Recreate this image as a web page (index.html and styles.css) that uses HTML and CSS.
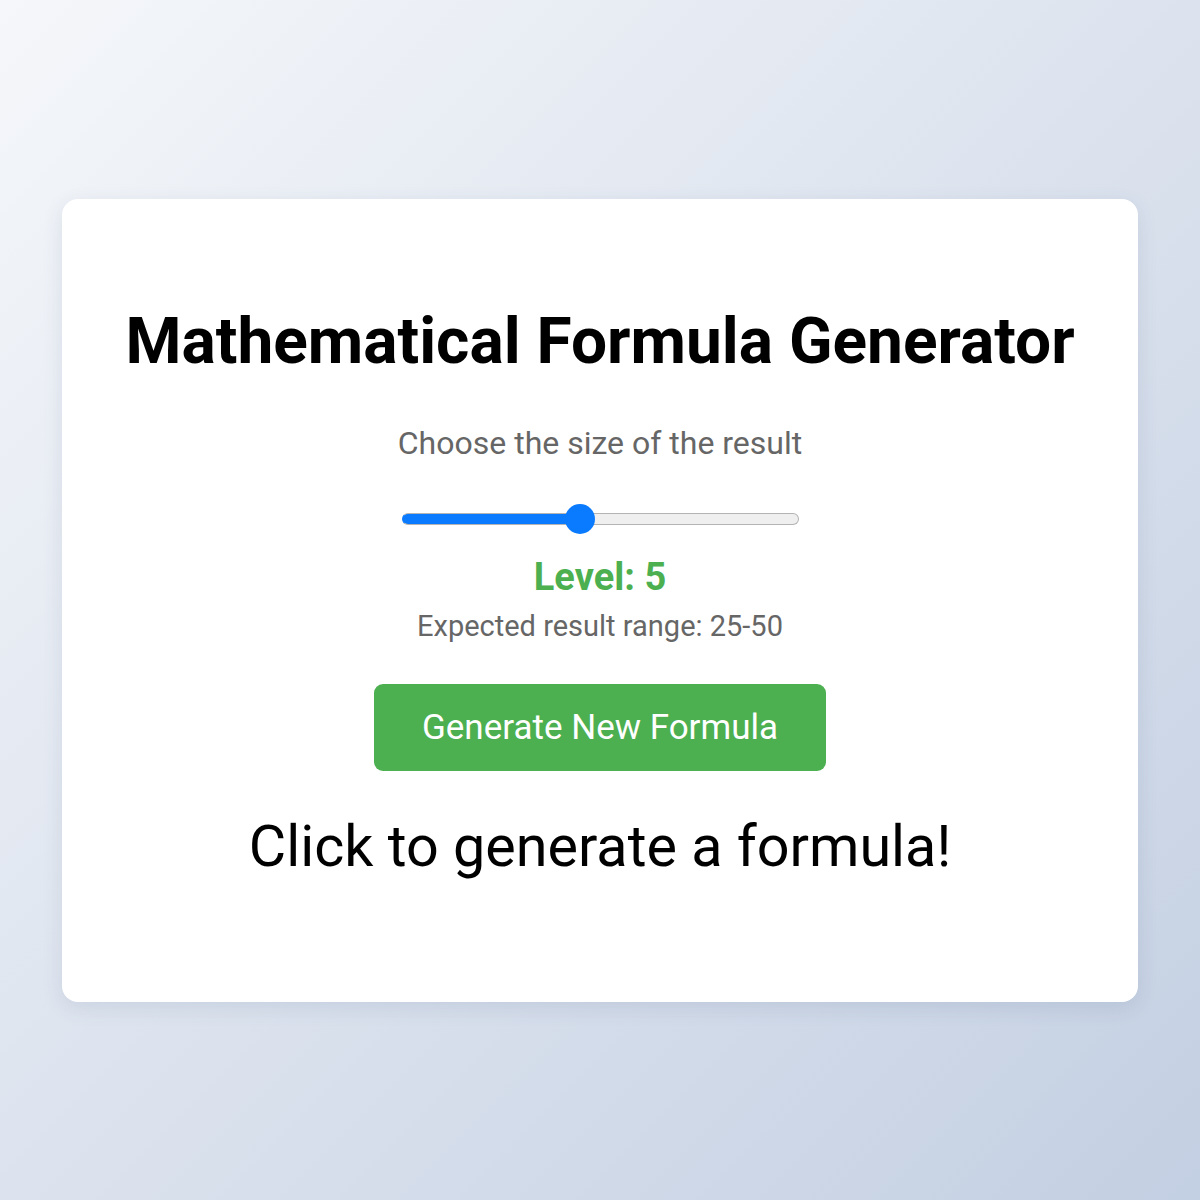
FILE: index.html
```html
<!DOCTYPE html>
<html lang="en">
<head>
<meta charset="utf-8">
<title>Mathematical Formula Generator</title>
<link rel="stylesheet" href="styles.css">
</head>
<body>
  <main class="card">
    <h1 class="title">Mathematical Formula Generator</h1>
    <p class="subtitle">Choose the size of the result</p>
    <input class="slider" type="range" min="1" max="10" value="5" aria-label="Result size">
    <div class="level">Level: 5</div>
    <div class="range-info">Expected result range: 25-50</div>
    <button class="generate" type="button">Generate New Formula</button>
    <div class="formula">Click to generate a formula!</div>
  </main>
</body>
</html>
```
FILE: styles.css
```css
html, body {
  margin: 0;
  padding: 0;
}

body {
  width: 1200px;
  height: 1200px;
  display: flex;
  align-items: center;
  justify-content: center;
  background: linear-gradient(135deg, #f5f7fa 0%, #c3cfe2 100%);
  font-family: Roboto, "Liberation Sans", sans-serif;
}

.card {
  box-sizing: border-box;
  width: 1076px;
  height: 803px;
  background: #ffffff;
  border-radius: 16px;
  box-shadow: 0 6px 20px rgba(60, 80, 120, 0.12);
  padding-top: 105px;
  display: flex;
  flex-direction: column;
  align-items: center;
  text-align: center;
}

.title {
  margin: 0;
  font-size: 64px;
  line-height: 1.2;
  font-weight: 700;
  color: #000;
}

.subtitle {
  margin: 44px 0 0;
  font-size: 32px;
  line-height: 1.2;
  color: #666;
}

.slider {
  -webkit-appearance: none;
  appearance: none;
  box-sizing: border-box;
  width: 397px;
  height: 12px;
  margin: 50px 0 0;
  padding: 0;
  border-radius: 6px;
  border: 1px solid #b3b3b3;
  border-left-color: #0a7bff;
  background: linear-gradient(to right, #0a7bff 0 45%, #efefef 45% 100%);
  outline: none;
}

.slider::-webkit-slider-thumb {
  -webkit-appearance: none;
  appearance: none;
  width: 30px;
  height: 30px;
  border-radius: 50%;
  background: #0a7bff;
  border: none;
}

.level {
  margin-top: 30px;
  font-size: 38px;
  line-height: 1.2;
  font-weight: 700;
  color: #4caf50;
}

.range-info {
  margin-top: 9px;
  font-size: 29px;
  line-height: 1.2;
  color: #666;
}

.generate {
  margin-top: 40px;
  width: 452px;
  height: 87px;
  border: none;
  border-radius: 9px;
  background: #4caf50;
  color: #fff;
  font-family: Roboto, "Liberation Sans", sans-serif;
  font-size: 35px;
  cursor: pointer;
}

.formula {
  margin-top: 41px;
  font-size: 57.5px;
  line-height: 1.2;
  color: #000;
}
```
